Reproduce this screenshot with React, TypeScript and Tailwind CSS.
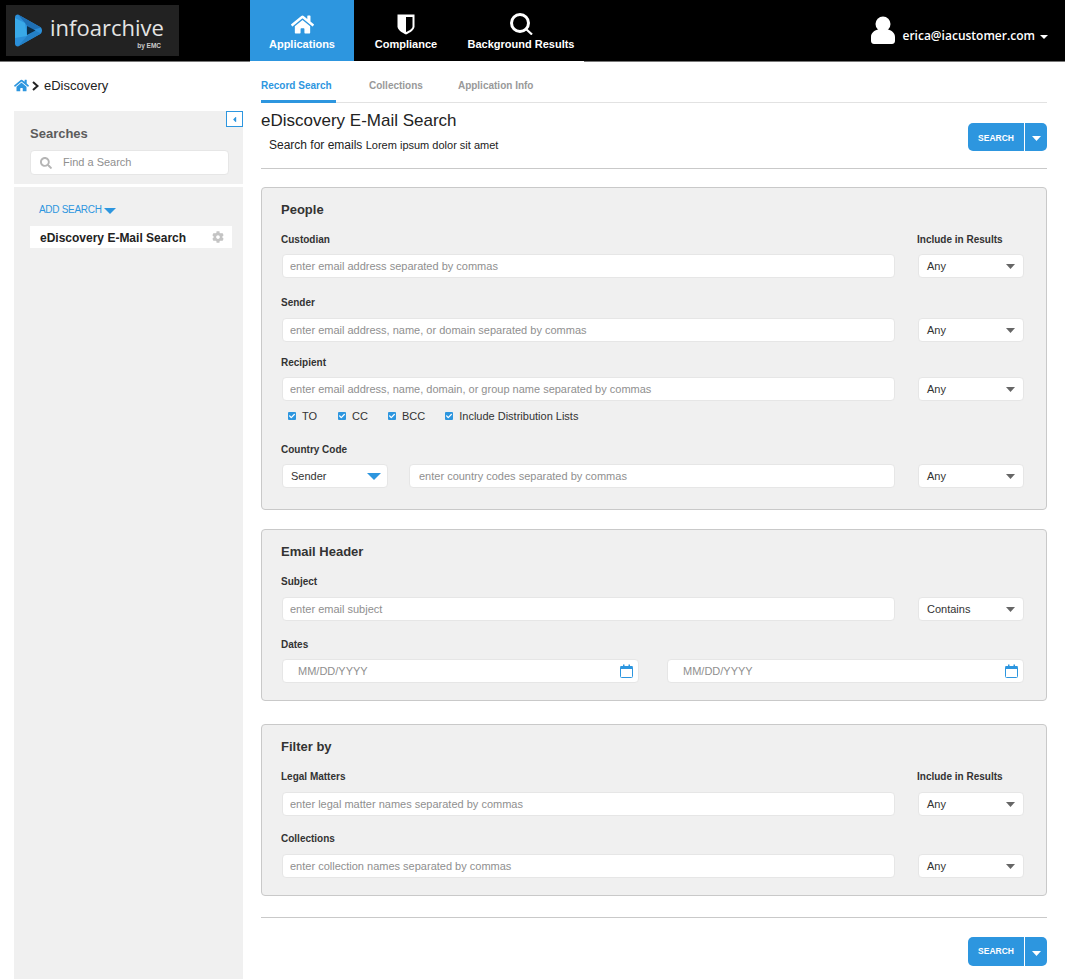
import React from "react";
import { FaHome, FaSearch, FaCog, FaCaretLeft, FaCheck } from "react-icons/fa";

function Label({ children, className = "" }: { children: React.ReactNode; className?: string }) {
  return <div className={`-ml-[1px] h-[14px] leading-[16px] text-[10px] font-bold text-[#333] ${className}`}>{children}</div>;
}

function TextBox({ placeholder, className = "" }: { placeholder: string; className?: string }) {
  return (
    <input
      readOnly
      placeholder={placeholder}
      className={`h-[24px] min-w-0 bg-white border border-[#e6e6e6] rounded-[4px] pl-[7px] text-[11px] text-[#333] placeholder:text-[#8f8f8f] outline-none ${className}`}
    />
  );
}

function Select({ value, blue = false }: { value: string; blue?: boolean }) {
  return (
    <div className="h-[24px] w-[106px] bg-white border border-[#e6e6e6] rounded-[4px] flex items-center justify-between pl-[8px] pr-[6px] text-[11px] text-[#333]">
      <span>{value}</span>
      {blue ? (
        <svg width="14" height="7" viewBox="0 0 14 7"><path d="M0 0h14L7 7z" fill="#2d96df" /></svg>
      ) : (
        <svg width="9" height="5" viewBox="0 0 9 5" className="mr-[2px]"><path d="M0 0h9L4.500 5z" fill="#666" /></svg>
      )}
    </div>
  );
}

function Row({ placeholder, select }: { placeholder: string; select: string }) {
  return (
    <div className="grid grid-cols-[613px_106px] gap-x-[23px]">
      <TextBox placeholder={placeholder} />
      <Select value={select} />
    </div>
  );
}

function Check({ label, className = "" }: { label: string; className?: string }) {
  return (
    <div className={`flex items-center gap-[6px] ${className}`}>
      <span className="w-[8px] h-[8px] bg-[#2d96df] flex items-center justify-center rounded-[1px] -mt-[1px]">
        <FaCheck className="text-white text-[6px]" />
      </span>
      <span className="text-[11px] leading-[14px] text-[#333]">{label}</span>
    </div>
  );
}

function DateBox() {
  return (
    <div className="flex-1 h-[24px] bg-white border border-[#e6e6e6] rounded-[4px] flex items-center justify-between pl-[15px] pr-[5px]">
      <span className="text-[11px] text-[#8f8f8f]">MM/DD/YYYY</span>
      <svg width="13" height="14" viewBox="0 0 13 14" fill="none">
        <rect x="0.5" y="2.500" width="12" height="11" rx="1" stroke="#2d96df" />
        <rect x="0.5" y="2" width="12" height="3" fill="#2d96df" />
        <rect x="3" y="0.5" width="1.500" height="3" fill="#2d96df" />
        <rect x="8.500" y="0.5" width="1.500" height="3" fill="#2d96df" />
      </svg>
    </div>
  );
}

function SearchButton({ className = "h-[28px]", labelClass = "pt-[2px]" }: { className?: string; labelClass?: string }) {
  return (
    <div className={`flex w-[79px] rounded-[5px] overflow-hidden text-white ${className}`}>
      <div className={`w-[56px] bg-[#2d96df] flex items-center justify-center text-[8.500px] font-bold ${labelClass}`}>SEARCH</div>
      <div className="w-[1px] bg-white" />
      <div className="flex-1 bg-[#2d96df] flex items-center justify-center pt-[3px]">
        <svg width="9" height="5" viewBox="0 0 9 5"><path d="M0 0h9L4.500 5z" fill="#fff" /></svg>
      </div>
    </div>
  );
}

function NavItem({ icon, label, className = "" }: { icon: React.ReactNode; label: string; className?: string }) {
  return (
    <div className={`h-[61px] flex flex-col items-center pt-[13px] text-white text-[11px] font-bold ${className}`}>
      <div className="h-[22px] flex items-center justify-center">{icon}</div>
      <div className="mt-[2px] leading-[14px]">{label}</div>
    </div>
  );
}

function Panel({ title, className = "", children }: { title: string; className?: string; children: React.ReactNode }) {
  return (
    <section className={`border border-[#c9c9c9] rounded-[4px] bg-[#f0f0f0] pl-[20px] pt-[11px] ${className}`}>
      <h2 className="-ml-[1px] h-[20px] leading-[22px] text-[13px] font-bold text-[#333]">{title}</h2>
      {children}
    </section>
  );
}

export default function App() {
  return (
    <div className="w-[1065px] h-[979px] overflow-hidden bg-white font-['Liberation_Sans',Arial,sans-serif]">
      <header className="h-[62px] bg-black flex">
        <div className="w-[250px] border-b border-[#777]">
          <div className="ml-[6px] mt-[5px] w-[173px] h-[51px] bg-[#222] flex items-start pl-[9px] pt-[9px]">
            <svg width="28" height="33" viewBox="0 0 28 33" className="shrink-0">
              <path d="M3 0.500L26 13.500Q28 16.500 26 19.500L3 32.500Q0 32.500 0 29.500V3.500Q0 0.500 3 0.500z" fill="#2b8fd9" />
              <path d="M3 0.500L26 13.500L16 16.500L10 9z" fill="#1f70b5" />
              <path d="M0 4L10 9L12 22L0 24z" fill="#39a9e8" />
              <path d="M3 32.500L12 22L20 16.500L26 19.500z" fill="#2480c6" />
              <path d="M12 12L20.500 16.500L12 21z" fill="#0d2c44" />
            </svg>
            <div className="ml-[7px] w-[115px]">
              <div className="text-[22px] leading-[24px] mt-[1px] font-medium text-[#e4e4e4] font-['Open_Sans',sans-serif]">infoarchive</div>
              <div className="text-[6.500px] leading-[7px] mt-[3px] font-bold text-right text-[#ccc] pr-[4px]">by EMC</div>
            </div>
          </div>
        </div>
        <div className="w-[334px] flex h-[62px] border-b border-white">
          <NavItem className="w-[104px] bg-[#2d96df]" icon={<FaHome className="text-[23px]" />} label="Applications" />
          <NavItem className="w-[104px]" icon={
            <svg width="18" height="21" viewBox="0 0 18 21"><path d="M0.500 0.500h17v12c0 3-4 6-8.500 8C4.500 18.500 0.500 15.500 0.500 12.500z" fill="#fff" /><path d="M9 3h6.500v9.500c0 2-3 4-6.500 5.500z" fill="#000" /></svg>
          } label="Compliance" />
          <NavItem className="w-[126px]" icon={
            <svg width="23" height="22" viewBox="0 0 23 22" fill="none"><circle cx="10" cy="10" r="8.500" stroke="#fff" strokeWidth="3" /><path d="M16 16L22 21.500" stroke="#fff" strokeWidth="2.200" /></svg>
          } label="Background Results" />
        </div>
        <div className="flex-1 border-b border-[#777] flex items-start justify-end pr-[17px] pt-[16px] text-white text-[12px] font-['Open_Sans',sans-serif]">
          <svg width="24" height="28" viewBox="0 0 24 28" className="mr-[8px]">
            <circle cx="12" cy="8" r="7.500" fill="#fff" />
            <path d="M7 13.500C3 14.500 0 17 0 21v4c0 2 1.500 3 3 3h18c1.500 0 3-1 3-3v-4c0-4-3-6.500-7-7.500-3 1.500-7 1.500-10 0z" fill="#fff" />
          </svg>
          <span className="font-semibold leading-[16px] mt-[12px]">erica@iacustomer.com</span>
          <svg width="8" height="4" viewBox="0 0 8 4" className="ml-[5px] mt-[19px]"><path d="M0 0h8L4 4z" fill="#fff" /></svg>
        </div>
      </header>

      <div className="flex h-[917px]">
        <aside className="ml-[14px] w-[229px] flex flex-col">
          <div className="h-[49px] flex items-center -mt-[1px]">
            <FaHome className="text-[#2d96df] text-[15px]" />
            <svg width="7" height="10" viewBox="0 0 7 10" fill="none" className="ml-[3px] mr-[5px]"><path d="M1 1l4.500 4L1 9" stroke="#222" strokeWidth="2" /></svg>
            <span className="text-[13px] text-[#222]">eDiscovery</span>
          </div>
          <div className="relative mt-[1px] h-[73px] bg-[#f0f0f0] pl-[16px] pt-[15px]">
            <div className="absolute right-0 top-0 w-[17px] h-[16px] border border-[#2d96df] bg-white flex items-center justify-center">
              <FaCaretLeft className="text-[#2d96df] text-[9px]" />
            </div>
            <div className="h-[16px] leading-[16px] text-[13px] font-bold text-[#5c5c5c]">Searches</div>
            <div className="mt-[8px] w-[199px] h-[25px] bg-white border border-[#e6e6e6] rounded-[4px] flex items-center pl-[9px]">
              <FaSearch className="text-[#b5b5b5] text-[12px]" />
              <span className="ml-[11px] text-[11px] text-[#8f8f8f]">Find a Search</span>
            </div>
          </div>
          <div className="mt-[3px] flex-1 bg-[#f0f0f0] pl-[16px]">
            <div className="pl-[9px] pt-[16px] h-[39px] flex items-start text-[10px] tracking-[-0.3px] leading-[14px] text-[#2d96df]">
              <span>ADD SEARCH</span>
              <svg width="12" height="6" viewBox="0 0 12 6" className="ml-[2px] mt-[5px]"><path d="M0 0h12L6 6z" fill="#2d96df" /></svg>
            </div>
            <div className="w-[202px] h-[22px] bg-white flex items-center justify-between pl-[10px] pr-[8px]">
              <span className="text-[12px] font-bold text-[#222] pt-[1px]">eDiscovery E-Mail Search</span>
              <FaCog className="text-[#c4c4c4] text-[12px]" />
            </div>
          </div>
        </aside>

        <main className="ml-[18px] w-[786px]">
          <nav className="h-[41px] border-b border-[#e2e2e2] flex text-[10px] font-bold text-[#999]">
            <div className="relative h-[40px] w-[75px] flex items-center pt-[7px] text-[#2d96df]">
              Record Search
              <div className="absolute left-0 right-0 bottom-[-1px] h-[3px] bg-[#2d96df]" />
            </div>
            <div className="ml-[33px] h-[40px] flex items-center pt-[7px]">Collections</div>
            <div className="ml-[35px] h-[40px] flex items-center pt-[7px]">Application Info</div>
          </nav>

          <div className="h-[66px] border-b border-[#c9c9c9] flex justify-between">
            <div>
              <h1 className="mt-[8px] h-[20px] leading-[20px] text-[17px] text-[#222]">eDiscovery E-Mail Search</h1>
              <p className="mt-[7px] ml-[8px] text-[#222] text-[12px] leading-[14px]">
                Search for emails <span className="text-[11px]">Lorem ipsum dolor sit amet</span>
              </p>
            </div>
            <div className="mt-[20px]"><SearchButton /></div>
          </div>

          <Panel title="People" className="mt-[18px] h-[323px]">
            <div className="mt-[13px] grid grid-cols-[613px_106px] gap-x-[23px] mb-[8px]">
              <Label>Custodian</Label>
              <Label>Include in Results</Label>
            </div>
            <Row placeholder="enter email address separated by commas" select="Any" />
            <Label className="mt-[17px] mb-[9px]">Sender</Label>
            <Row placeholder="enter email address, name, or domain separated by commas" select="Any" />
            <Label className="mt-[13px] mb-[8px]">Recipient</Label>
            <Row placeholder="enter email address, name, domain, or group name separated by commas" select="Any" />
            <div className="mt-[8px] ml-[6px] flex">
              <Check label="TO" />
              <Check label="CC" className="ml-[21px]" />
              <Check label="BCC" className="ml-[20px]" />
              <Check label="Include Distribution Lists" className="ml-[20px]" />
            </div>
            <Label className="mt-[19px] mb-[8px]">Country Code</Label>
            <div className="flex">
              <Select value="Sender" blue />
              <TextBox className="ml-[21px] w-[486px] pl-[9px]" placeholder="enter country codes separated by commas" />
              <div className="ml-[23px]"><Select value="Any" /></div>
            </div>
          </Panel>

          <Panel title="Email Header" className="mt-[19px] h-[172px]">
            <Label className="mt-[13px] mb-[9px]">Subject</Label>
            <Row placeholder="enter email subject" select="Contains" />
            <Label className="mt-[16px] mb-[8px]">Dates</Label>
            <div className="w-[742px] flex gap-x-[28px]">
              <DateBox />
              <DateBox />
            </div>
          </Panel>

          <Panel title="Filter by" className="mt-[23px] h-[172px]">
            <div className="mt-[13px] grid grid-cols-[613px_106px] gap-x-[23px] mb-[9px]">
              <Label>Legal Matters</Label>
              <Label>Include in Results</Label>
            </div>
            <Row placeholder="enter legal matter names separated by commas" select="Any" />
            <Label className="mt-[15px] mb-[9px]">Collections</Label>
            <Row placeholder="enter collection names separated by commas" select="Any" />
          </Panel>

          <div className="mt-[21px] border-t border-[#c9c9c9] pt-[19px] flex justify-end">
            <SearchButton className="h-[29px]" labelClass="" />
          </div>
        </main>
      </div>
    </div>
  );
}
